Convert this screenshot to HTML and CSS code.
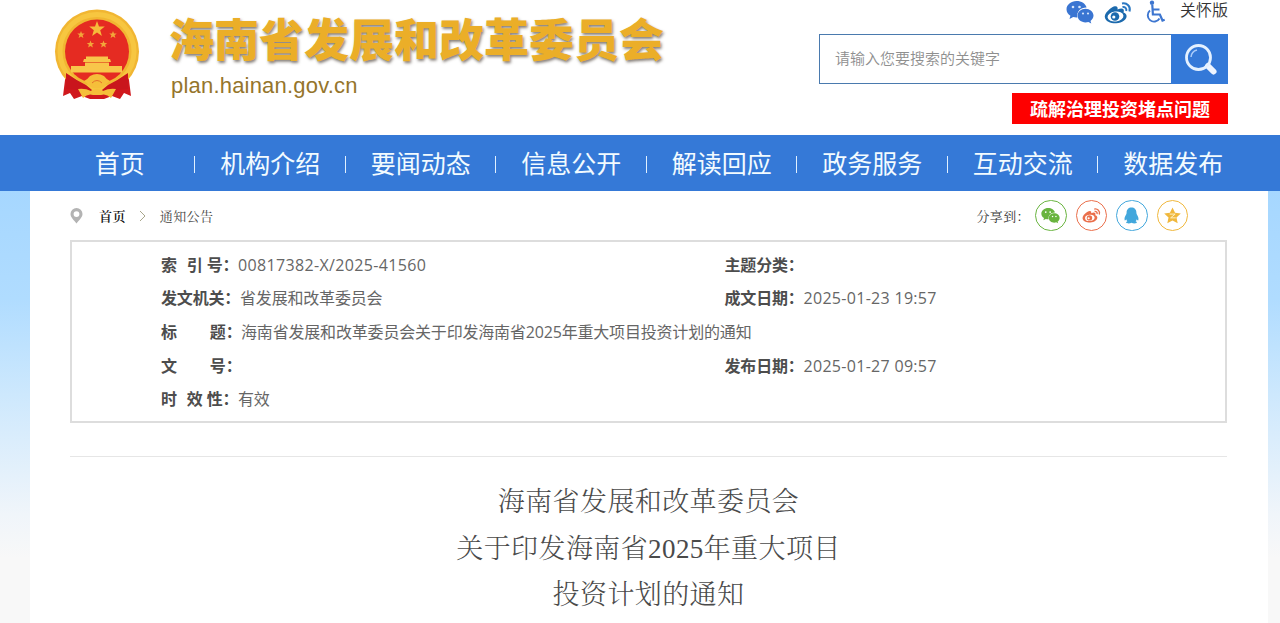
FILE: index.html
```html
<!DOCTYPE html>
<html lang="zh-CN">
<head>
    <meta charset="UTF-8">
    <title>海南省发展和改革委员会</title>
    <link rel="stylesheet" href="styles.css">
</head>
<body>

<header class="header">
    <svg class="emblem" viewBox="0 0 86 92">
        <path d="M12 63 L74 63 L77 87 L70 84 L66 90 L58 87 L50 90 L36 90 L28 87 L20 90 L16 84 L9 87z" fill="#d0181d"/>
        <circle cx="43" cy="42.500" r="42" fill="#f1b632"/>
        <circle cx="43" cy="42.500" r="37" fill="none" stroke="#f7c640" stroke-width="5"/>
        <circle cx="43" cy="42.500" r="32" fill="#e52b22"/>
        <path d="M43 12l2 5.500 5.800.1-4.600 3.600 1.700 5.700-4.900-3.300-4.900 3.300 1.700-5.700-4.600-3.600 5.800-.1z" fill="#f6bb3a"/>
        <g fill="#f2a63a">
            <path d="M27 22l1 2.500 2.700.1-2.100 1.700.8 2.700-2.400-1.500-2.400 1.500.8-2.700-2.100-1.700 2.700-.1z"/>
            <path d="M59 22l1 2.500 2.700.1-2.100 1.700.8 2.700-2.400-1.500-2.400 1.500.8-2.700-2.100-1.700 2.700-.1z"/>
            <path d="M36.500 31.500l1 2.500 2.700.1-2.100 1.700.8 2.700-2.400-1.500-2.400 1.500.8-2.700-2.100-1.700 2.700-.1z"/>
            <path d="M49.500 31.500l1 2.500 2.700.1-2.100 1.700.8 2.700-2.400-1.500-2.400 1.500.8-2.700-2.100-1.700 2.700-.1z"/>
        </g>
        <path d="M32 47.500h22v2.500h2l1 3h-2v4h13v6.500H17V57h14v-4h-2l1-3h2z" fill="#f8c64a"/>
        <path d="M31 53.500h24" stroke="#e9722e"/>
        <path d="M12 64 Q22 71 32 76 L38 81 L33 87 L24 81 L12 80z M74 64 Q64 71 54 76 L48 81 L53 87 L62 81 L74 80z" fill="#c9151c"/>
        <path d="M30 72 Q34 70 36 67 Q43 63 50 67 Q52 70 56 72 Q52 74 51 77 Q43 82 35 77 Q34 74 30 72z" fill="#f5bf3a"/>
        <path d="M38 74 Q43 69 48 74" fill="none" stroke="#e5702b"/>
        <path d="M24 80 Q31 79 37 82 Q43 78 49 82 Q55 79 62 80 L57 89 Q52 84 47 86 L39 86 Q34 84 29 89z" fill="#f5bf3a"/>
    </svg>
    <div class="brand">
        <h1 class="brand-name">海南省发展和改革委员会</h1>
        <p class="brand-url">plan.hainan.gov.cn</p>
    </div>
    <div class="tools">
        <div class="tools-links">
            <svg class="tool-wechat" viewBox="0 0 28 24" fill="#3a75d2">
                <path d="M10.500 1C5 1 .5 4.700.5 9.300c0 2.700 1.500 5 3.900 6.500L3.500 19l3.700-2c1 .3 2.100.5 3.300.5h.8C10.200 11.500 15 7.300 20.600 7.500 19.700 3.700 15.500 1 10.500 1z"/>
                <path d="M27.500 15.600c0-3.900-3.700-6.900-8-6.900s-8 3-8 6.900 3.700 6.900 8 6.900c1 0 2-.2 2.900-.5l2.900 1.500-.8-2.600c1.800-1.200 3-3.200 3-5.300z"/>
                <g fill="#d5e5fb"><circle cx="7" cy="7" r="1.300"/><circle cx="13.500" cy="7" r="1.300"/><circle cx="17" cy="13.500" r="1.100"/><circle cx="22" cy="13.500" r="1.100"/></g>
            </svg>
            <svg class="tool-weibo" viewBox="0 0 28 24">
                <path d="M19.500 11.500c1.500-4-1.500-5-6-3 .9-3-1.500-4.500-6-1.800C3.500 9.500.5 13 .8 16c.5 4.500 6 6.500 11.500 6.300 6-.3 10.500-4 10.300-7.300-.1-2-1.400-3-3.100-3.500z" fill="#1c6aad"/>
                <ellipse cx="11.500" cy="15.500" rx="8" ry="5" fill="#fff" transform="rotate(-8 11.500 15.500)"/>
                <circle cx="11" cy="15.500" r="4.300" fill="#1c6aad"/><circle cx="9.800" cy="16" r="1.600" fill="#fff"/>
                <path d="M18 2.500c5-1 9 3 7.500 8M18.500 6c2.500-.5 4.500 1.500 3.700 4" fill="none" stroke="#2b78c2" stroke-width="2"/>
            </svg>
            <svg class="tool-access" viewBox="0 0 20 24" fill="none" stroke="#3d76d0" stroke-width="2.200">
                <circle cx="7" cy="2.800" r="2.200" fill="#3d76d0" stroke="none"/>
                <path d="M7.300 5l.6 9.500h7l2.600 6 2.200-.8M8 9.500h6.500"/>
                <path d="M5 10.500a6.300 6.300 0 1 0 9.500 8" stroke-width="1.900"/>
            </svg>
            <a class="care">关怀版</a>
        </div>
        <div class="search">
            <div class="search-input">请输入您要搜索的关键字</div>
            <div class="search-button">
                <svg viewBox="0 0 34 34" fill="none">
                    <path d="M24 23l5.500 5.500" stroke="#eef5ff" stroke-width="6" stroke-linecap="round"/>
                    <circle cx="14.500" cy="14.500" r="12" stroke="#e4f1ff" stroke-width="2.800"/>
                    <path d="M7 14a8 8 0 0 1 6-7" stroke="#a8cbfa" stroke-width="1.500"/>
                </svg>
            </div>
        </div>
        <a class="notice">疏解治理投资堵点问题</a>
    </div>
</header>

<nav class="nav">
    <a class="nav-item">首页</a>
    <a class="nav-item">机构介绍</a>
    <a class="nav-item">要闻动态</a>
    <a class="nav-item">信息公开</a>
    <a class="nav-item">解读回应</a>
    <a class="nav-item">政务服务</a>
    <a class="nav-item">互动交流</a>
    <a class="nav-item">数据发布</a>
</nav>

<main class="page">
    <div class="panel">
        <div class="bar">
            <div class="crumbs">
                <svg class="pin" viewBox="0 0 12 16"><path d="M6 0a6 6 0 0 0-6 6c0 3.500 3.500 6 6 9.500C8.500 12 12 9.500 12 6a6 6 0 0 0-6-6zm0 3.200a2.900 2.900 0 1 1 0 5.800 2.900 2.900 0 0 1 0-5.800z" fill="#b3b3b3" fill-rule="evenodd"/></svg>
                <a class="crumb-home">首页</a>
                <svg class="arrow" viewBox="0 0 7 12"><path d="M1 1l5 5-5 5" fill="none" stroke="#a9a78c"/></svg>
                <a class="crumb">通知公告</a>
            </div>
            <div class="share">
                <span class="share-label">分享到：</span>
                <a class="share-item wechat">
                    <svg viewBox="0 0 28 24" fill="currentColor">
                        <path d="M10.500 1C5 1 .5 4.700.5 9.300c0 2.700 1.500 5 3.900 6.500L3.500 19l3.700-2c1 .3 2.100.5 3.300.5h.8C10.200 11.500 15 7.300 20.600 7.500 19.700 3.700 15.500 1 10.500 1z"/>
                        <path d="M27.500 15.600c0-3.900-3.700-6.900-8-6.900s-8 3-8 6.900 3.700 6.900 8 6.900c1 0 2-.2 2.900-.5l2.900 1.500-.8-2.600c1.800-1.200 3-3.200 3-5.300z"/>
                        <g fill="#fff"><circle cx="7" cy="7" r="1.300"/><circle cx="13.500" cy="7" r="1.300"/><circle cx="17" cy="13.500" r="1.100"/><circle cx="22" cy="13.500" r="1.100"/></g>
                    </svg>
                </a>
                <a class="share-item weibo">
                    <svg viewBox="0 0 28 24">
                        <path d="M19.500 11.500c1.500-4-1.500-5-6-3 .9-3-1.500-4.500-6-1.800C3.500 9.500.5 13 .8 16c.5 4.500 6 6.500 11.500 6.300 6-.3 10.500-4 10.300-7.300-.1-2-1.400-3-3.100-3.500z" fill="currentColor"/>
                        <ellipse cx="11.500" cy="15.500" rx="7" ry="4.600" fill="#fff" transform="rotate(-8 11.500 15.500)"/>
                        <circle cx="11" cy="15.500" r="4" fill="currentColor"/><circle cx="9.800" cy="16" r="1.600" fill="#fff"/>
                        <path d="M18 2.500c5-1 9 3 7.500 8M18.500 6c2.500-.5 4.500 1.500 3.700 4" fill="none" stroke="currentColor" stroke-width="2"/>
                    </svg>
                </a>
                <a class="share-item qq">
                    <svg viewBox="0 0 18 18" fill="currentColor"><path d="M9 .5c-3.200 0-5.200 2.200-5.200 5.500 0 1-.3 1.700-.8 2.500-1.300 2-1.700 4-1.200 5.500.4.600 1.200-.3 1.700-1 .2.900.6 1.600 1.200 2.200-1 .4-1.500.9-1.300 1.500.4.900 4 .9 5.600.1 1.600.8 5.200.8 5.600-.1.200-.6-.3-1.100-1.300-1.500.6-.6 1-1.300 1.200-2.200.5.700 1.300 1.600 1.700 1 .5-1.500.1-3.500-1.200-5.500-.5-.8-.8-1.500-.8-2.500C14.200 2.700 12.200.5 9 .5z"/></svg>
                </a>
                <a class="share-item qzone">
                    <svg viewBox="0 0 18 18"><path d="M9 .5l2.700 5.700 6.100.7-4.600 4.200 1.300 6.200L9 14.200l-5.500 3.100 1.300-6.200L.2 6.900l6.100-.7z" fill="currentColor"/><path d="M6 7.500h5.800L7 11.500h5.500" fill="none" stroke="#fff3cc"/></svg>
                </a>
            </div>
        </div>

        <div class="info">
            <div class="info-row">
                <div class="info-cell"><b class="label label-three"><span>索</span><span>引</span><span>号：</span></b><span class="code">00817382-X/2025-41560</span></div>
                <div class="info-cell"><b class="label">主题分类：</b></div>
            </div>
            <div class="info-row">
                <div class="info-cell"><b class="label">发文机关：</b><span>省发展和改革委员会</span></div>
                <div class="info-cell"><b class="label">成文日期：</b><span class="date">2025-01-23 19:57</span></div>
            </div>
            <div class="info-row">
                <div class="info-cell"><b class="label label-two"><span>标</span><span>题：</span></b><span>海南省发展和改革委员会关于印发海南省2025年重大项目投资计划的通知</span></div>
            </div>
            <div class="info-row">
                <div class="info-cell"><b class="label label-two"><span>文</span><span>号：</span></b></div>
                <div class="info-cell"><b class="label">发布日期：</b><span class="date">2025-01-27 09:57</span></div>
            </div>
            <div class="info-row">
                <div class="info-cell"><b class="label label-three"><span>时</span><span>效</span><span>性：</span></b><span>有效</span></div>
            </div>
        </div>

        <article class="article">
            <h2 class="article-title">海南省发展和改革委员会<br>关于印发海南省2025年重大项目<br>投资计划的通知</h2>
        </article>
    </div>
</main>

</body>
</html>
```
FILE: styles.css
```css
* {
    box-sizing: border-box;
}

body {
    margin: 0;
    height: 623px;
    overflow: hidden;
    background: #fff;
    color: #555;
    font: 350 16px/1.5 "Open Sans", "Noto Sans CJK SC", sans-serif;
}

h1, h2, p {
    margin: 0;
    font-weight: normal;
}

svg {
    display: block;
    flex: none;
}

.header {
    display: flex;
    height: 135px;
    padding: 0 52px 0 54px;
}

.emblem {
    width: 86px;
    height: 92px;
    margin-top: 9px;
}

.brand {
    margin-left: 29px;
    padding-top: 7px;
}

.brand-name {
    font: 900 45px/62px "Noto Sans CJK SC", sans-serif;
    color: #ebae28;
    white-space: nowrap;
    text-shadow: 1px 2px 3px rgba(70, 60, 50, .65);
}

.brand-url {
    margin: 4px 0 0 2px;
    font: 22px/26px "Liberation Sans", Arial, sans-serif;
    letter-spacing: .2px;
    color: #95752b;
}

.tools {
    display: flex;
    flex-direction: column;
    align-items: flex-end;
    width: 409px;
    margin-left: auto;
}

.tools-links {
    display: flex;
    height: 34px;
}

.tool-wechat {
    width: 28px;
    height: 24px;
}

.tool-weibo {
    width: 28px;
    height: 24px;
    margin-top: 1px;
    margin-left: 10px;
}

.tool-access {
    width: 20px;
    height: 24px;
    margin-left: 13px;
}

.care {
    margin-left: 15px;
    font-size: 16px;
    line-height: 21px;
    color: #333;
}

.search {
    display: flex;
    width: 100%;
    height: 50px;
}

.search-input {
    flex: 1;
    padding-left: 15px;
    border: 1px solid #4a7aae;
    border-right: 0;
    font-size: 15px;
    line-height: 46px;
    color: #8f8f8f;
}

.search-button {
    width: 57px;
    padding: 9px 0 0 13px;
    background: #3479d8;
}

.search-button svg {
    width: 34px;
    height: 34px;
}

.notice {
    width: 216px;
    height: 31px;
    margin-top: 9px;
    background: #fe0000;
    color: #fff;
    font-size: 18px;
    font-weight: bold;
    line-height: 32px;
    text-align: center;
}

.nav {
    display: flex;
    height: 56px;
    padding-left: 44.5px;
    background: #3579d7;
}

.nav-item {
    position: relative;
    width: 150.5px;
    color: #f2fbff;
    font-size: 25px;
    font-weight: 400;
    line-height: 57px;
    text-align: center;
}

.nav-item + .nav-item::before {
    content: "";
    position: absolute;
    left: -1px;
    top: 21px;
    width: 1px;
    height: 17px;
    background: #e0f0ff;
}

.page {
    height: 432px;
    padding: 0 12px 0 30px;
    background: linear-gradient(#a6d7ff, #b0dcff 25%, #cde8fd 47%, #f0f5fa 75%, #f8f8f8 85%);
}

.panel {
    height: 100%;
    padding: 0 41px 0 40px;
    background: #fff;
}

.bar {
    display: flex;
    justify-content: space-between;
    height: 49px;
    padding-right: 39px;
    font-family: "Noto Serif CJK SC", "Noto Sans CJK SC", serif;
    font-size: 13px;
    font-weight: normal;
    letter-spacing: .4px;
    line-height: 49px;
    color: #444;
}

.crumbs, .share {
    display: flex;
    align-items: center;
}

.pin {
    width: 13px;
    height: 16px;
}

.crumb-home {
    margin-left: 16px;
    font-weight: 600;
    color: #111;
}

.arrow {
    width: 7px;
    height: 12px;
    margin: 0 14px 0 13px;
}

.share {
    gap: 9px;
}

.share-label {
    margin-right: -4px;
    color: #333;
}

.share-item {
    display: flex;
    align-items: center;
    justify-content: center;
    width: 31.500px;
    height: 31.500px;
    border: 1px solid currentColor;
    border-radius: 50%;
}

.share-item svg {
    width: 19px;
    height: 17px;
}

.wechat {
    color: #69b43f;
}

.weibo {
    color: #ea6f4b;
}

.qq {
    color: #42a7dc;
}

.qzone {
    color: #f0b83d;
}

.info {
    height: 183px;
    padding: 6.500px 0 0 89px;
    border: 2px solid #ddd;
    color: #666;
    font-weight: 400;
}

.info-row {
    display: flex;
    height: 33.700px;
    line-height: 33.700px;
}

.info-cell {
    display: flex;
    flex: none;
    width: 563.500px;
    letter-spacing: -.18px;
    white-space: nowrap;
}

.label {
    width: 79px;
    color: #4d4d4d;
}

.label-three, .label-two {
    display: flex;
}

.label-three {
    width: 77px;
}

.label-three span:first-child {
    margin-right: 10px;
}

.label-three span:nth-child(2) {
    margin-right: 4px;
}

.label-two {
    width: 80px;
}

.label-two span:first-child {
    margin-right: 33px;
}

.code {
    letter-spacing: .35px;
}

.date {
    letter-spacing: .3px;
}

.article {
    margin-top: 33px;
    padding-top: 22px;
    border-top: 1px solid #e6e6e6;
}

.article-title {
    font: 27px/46.500px "Liberation Serif", "Noto Serif CJK SC", "Noto Sans CJK SC", serif;
    font-weight: 350;
    letter-spacing: .4px;
    text-align: center;
    color: #4a4a4a;
}
```
